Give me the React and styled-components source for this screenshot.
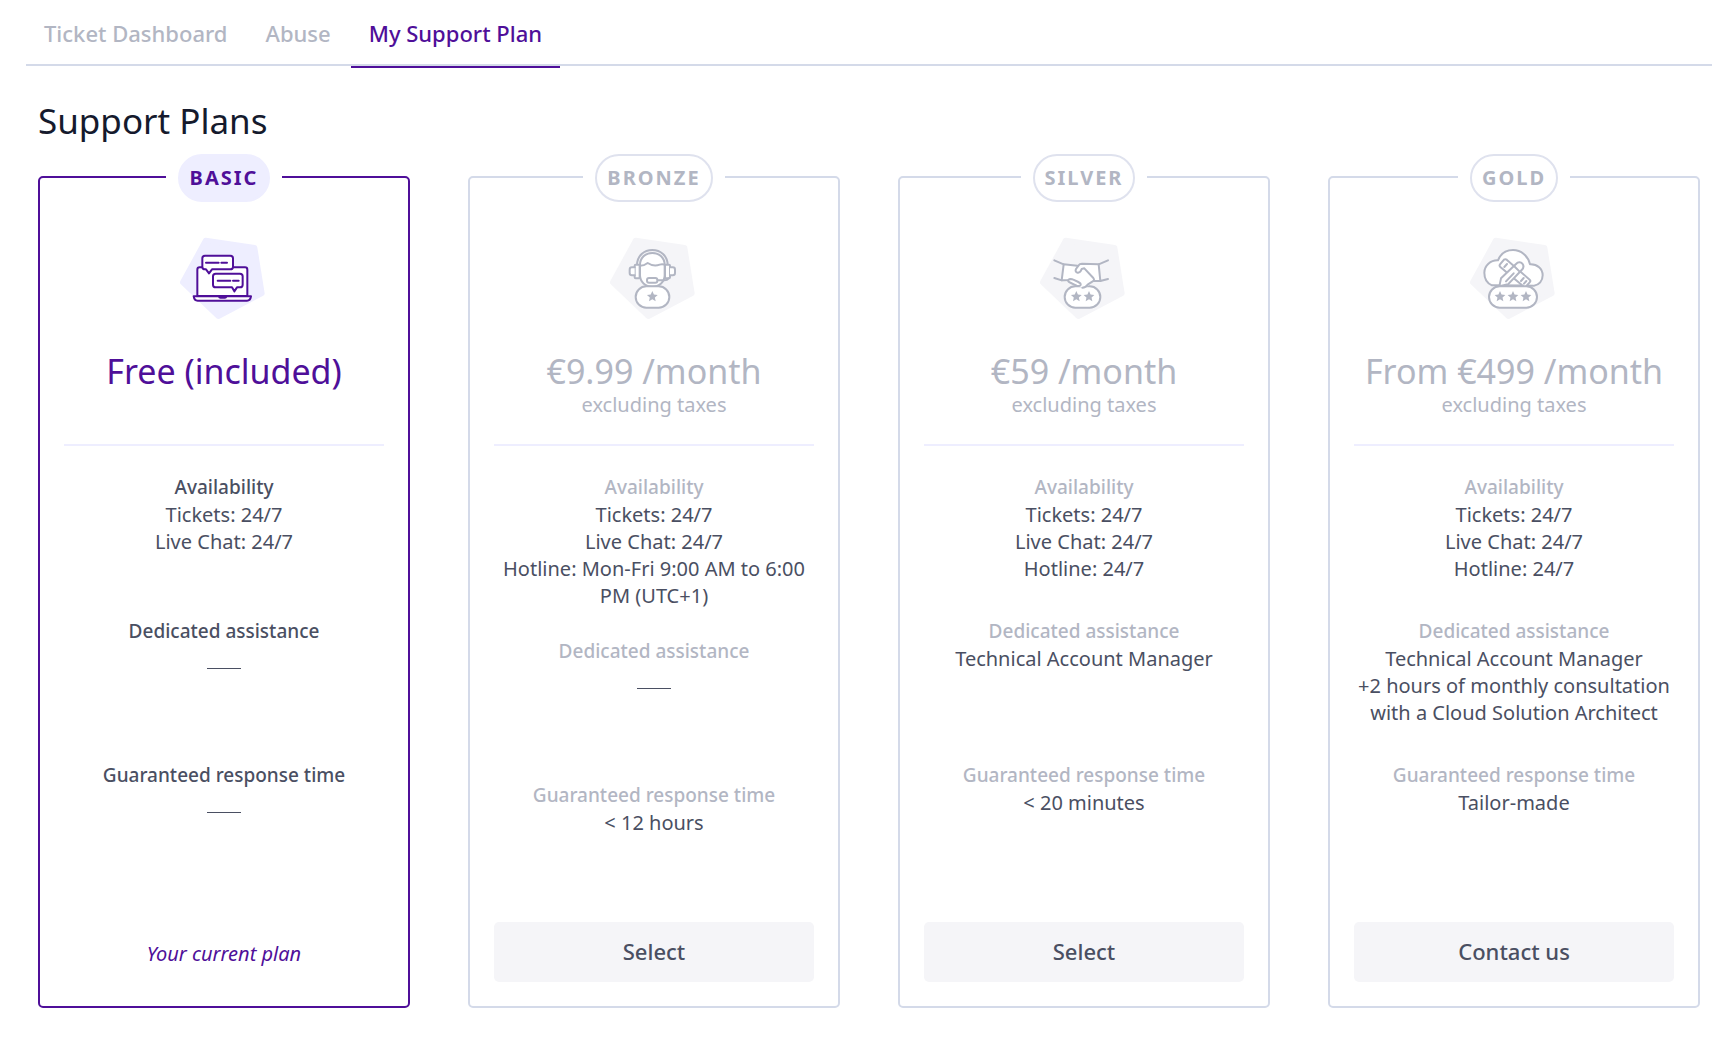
import React from "react";
import styled, { createGlobalStyle } from "styled-components";

const color = {
  purple: "#4f0f99",
  lilac: "#eeeeff",
  grey: "#b2b6c3",
  line: "#d4dae9",
  pillLine: "#dfe2ee",
  text: "#4a4f62",
  heading: "#151a2d",
  surface: "#f5f5f8",
};

const GlobalStyle = createGlobalStyle`
  *, *::before, *::after { box-sizing: border-box; }
  body {
    margin: 0;
    background: #fff;
    color: ${color.text};
    font-family: "Noto Sans", "Open Sans", sans-serif;
  }
`;

const TabBar = styled.nav`
  display: flex;
  gap: 2px;
  margin: 0 24px 0 26px;
  border-bottom: 2px solid ${color.line};
`;

const Tab = styled.a`
  position: relative;
  padding: 18px 18px 16px;
  font-size: 22px;
  line-height: 30px;
  font-weight: 500;
  text-decoration: none;
  color: ${(p) => (p.$active ? color.purple : color.grey)};

  &::after {
    content: "";
    display: ${(p) => (p.$active ? "block" : "none")};
    position: absolute;
    left: 0;
    right: 0;
    bottom: -4px;
    height: 2px;
    background: ${color.purple};
  }
`;

const Main = styled.main`
  padding: 33px 36px 46px 38px;
`;

const Title = styled.h1`
  margin: 0 0 33px;
  font-size: 35px;
  line-height: 44px;
  font-weight: 400;
  color: ${color.heading};
`;

const Plans = styled.div`
  display: grid;
  grid-template-columns: repeat(4, minmax(0, 1fr));
  gap: 58px;

  @media (max-width: 1300px) {
    grid-template-columns: repeat(2, minmax(0, 1fr));
  }
  @media (max-width: 760px) {
    grid-template-columns: minmax(0, 1fr);
  }
`;

const Card = styled.article`
  display: flex;
  flex-direction: column;
  align-items: center;
  padding: 0 24px 24px;
  border: 2px solid ${(p) => (p.$current ? color.purple : color.line)};
  border-radius: 5px;
  text-align: center;
`;

const PillSlot = styled.div`
  margin-top: -24px;
  padding: 0 12px;
  background: #fff;
`;

const Pill = styled.h2`
  margin: 0;
  padding: 0 10px;
  border: 2px solid ${(p) => (p.$current ? color.lilac : color.pillLine)};
  border-radius: 24px;
  background: ${(p) => (p.$current ? color.lilac : "#fff")};
  color: ${(p) => (p.$current ? color.purple : color.grey)};
  font-size: 20px;
  line-height: 44px;
  font-weight: 700;
  letter-spacing: 2px;
`;

const Art = styled.svg`
  display: block;
  width: 90px;
  height: 84px;
  margin: 34px 0 30px;
  color: ${(p) => (p.$current ? color.purple : color.grey)};
`;

const PriceBlock = styled.div`
  min-height: 68px;
  color: ${(p) => (p.$current ? color.purple : color.grey)};
`;

const Price = styled.p`
  margin: 0;
  font-size: 34px;
  line-height: 42px;
`;

const Taxes = styled.p`
  margin: 0;
  font-size: 20px;
  line-height: 26px;
`;

const Divider = styled.hr`
  width: 100%;
  height: 2px;
  margin: 26px 0 27px;
  border: 0;
  background: ${color.lilac};
`;

const Features = styled.div`
  display: flex;
  flex-direction: column;
  gap: 28px;
  width: 100%;
  margin-bottom: 25px;
`;

const Feature = styled.section`
  min-height: 116px;
`;

const FeatureName = styled.h3`
  margin: 0;
  font-size: 19px;
  line-height: 28px;
  font-weight: 500;
  color: ${(p) => (p.$current ? color.text : color.grey)};
`;

const FeatureList = styled.ul`
  margin: 0;
  padding: 0;
  list-style: none;
  font-size: 20px;
  line-height: 27px;
`;

const NoFeature = styled.hr`
  width: 34px;
  height: 1px;
  margin: 23px auto 0;
  border: 0;
  background: ${color.text};
`;

const PlanButton = styled.button`
  width: 100%;
  height: 60px;
  margin-top: auto;
  padding: 0 0 2px;
  border: 0;
  border-radius: 5px;
  background: ${color.surface};
  color: ${color.text};
  font-family: inherit;
  font-size: 22px;
  font-weight: 500;
  cursor: pointer;
`;

const CurrentNote = styled.p`
  margin: auto 0 0;
  padding-top: 4px;
  font-size: 20px;
  line-height: 56px;
  font-style: italic;
  color: ${color.purple};
`;

const starPoints = (cx, cy) =>
  Array.from({ length: 10 }, (_, i) => {
    const r = i % 2 ? 8 : 17;
    const a = (Math.PI / 5) * i - Math.PI / 2;
    return `${(cx + r * Math.cos(a)).toFixed(1)},${(cy + r * Math.sin(a)).toFixed(1)}`;
  }).join(" ");

function Stars({ x, width, at }) {
  return (
    <>
      <rect x={x} y="199" width={width} height="64" rx="32" />
      {at.map((cx) => (
        <polygon key={cx} points={starPoints(cx, 230)} fill="currentColor" stroke="none" />
      ))}
    </>
  );
}

function ChatDrawing() {
  return (
    <>
      <path d="M112 228V149Q112 142 119 142H255Q262 142 262 149V228Z" />
      <path d="M101 229H273Q271 242 261 242H113Q103 242 101 229Z" />
      <path d="M174 230H202Q200 236 195 236H181Q176 236 174 230Z" fill="currentColor" stroke="none" />
      <path d="M135 107H211Q219 107 219 115V140Q219 148 211 148H156L147 160L138 148H135Q127 148 127 140V115Q127 107 135 107Z" />
      <path d="M167 161H240Q248 161 248 169V194Q248 202 240 202H231L223 214L216 202H167Q159 202 159 194V169Q159 161 167 161Z" />
      <path d="M138 128H176M184 128H201M173 182H211M219 182H236" />
    </>
  );
}

function HeadsetDrawing() {
  return (
    <>
      <path d="M150 135V166C150 186 166 200 187 200C208 200 224 186 224 166V135C224 113 208 99 187 99C166 99 150 113 150 135Z" />
      <path d="M141 134C142 107 162 90 187 90C212 90 232 107 233 134" fill="none" />
      <path d="M146 137Q160 139 173 129Q191 141 209 134Q218 131 230 136" fill="none" />
      <rect x="134" y="134" width="15" height="41" rx="3" />
      <rect x="225" y="134" width="15" height="41" rx="3" />
      <path d="M134 142H126Q119 142 119 149V159Q119 166 126 166H134M240 142H248Q255 142 255 149V159Q255 166 248 166H240" />
      <path d="M202 181H223Q232 181 236 175" fill="none" />
      <rect x="171" y="174" width="31" height="14" rx="6" />
      <Stars x={137} width={101} at={[187]} />
    </>
  );
}

function HandshakeDrawing() {
  return (
    <>
      <Stars x={134} width={107} at={[169, 207]} />
      <path d="M131 133L175 136L190 131L236 134L241 183L222 183L197 203H188L125 181Z" stroke="none" />
      <path d="M103 121L131 133L125 181L103 174M264 121L236 133L241 183L264 177M131 133L172 137" fill="none" />
      <path d="M236 133L186 131Q179 131 176 136L168 147Q164 156 173 158Q181 159 185 147L193 145L220 174Q225 181 218 184L204 193Q197 203 187 203" fill="none" />
      <path d="M222 183H241M125 181H145" fill="none" />
      <path d="M152 177Q143 178 145 184Q147 187 170 197Q180 200 182 195Q183 190 175 186L160 179Q156 177 152 177Z" />
    </>
  );
}

function CloudDrawing() {
  return (
    <>
      <path d="M126 196C110 189 103 174 103 158C103 137 122 120 144 121C152 101 168 90 189 90C213 90 234 107 240 133C262 132 278 147 278 166C278 183 267 195 252 197Z" />
      <path d="M150 133L162 119Q166 116 170 119L239 179Q243 183 239 187L228 199Q224 203 220 199L151 141Q147 137 150 133Z" />
      <path d="M163 141L171 132M213 183L221 174M222 191L229 183" fill="none" />
      <path d="M153 175L198 132C205 124 213 126 217 131C222 137 220 145 215 150L174 193L148 199Z" />
      <path d="M192 138L209 155M168 184L191 160" fill="none" />
      <Stars x={117} width={144} at={[150, 189, 228]} />
    </>
  );
}

function PlanArt({ current, drawing: Drawing }) {
  return (
    <Art $current={current} viewBox="57 48 270 252" aria-hidden="true">
      <path
        d="M137 61L284 83L306 220L175 289L68 187Z"
        fill={current ? color.lilac : color.surface}
        stroke={current ? color.lilac : color.surface}
        strokeWidth="16"
        strokeLinejoin="round"
      />
      <g fill="#fff" stroke="currentColor" strokeWidth="6" strokeLinecap="round" strokeLinejoin="round">
        <Drawing />
      </g>
    </Art>
  );
}

const tabs = ["Ticket Dashboard", "Abuse", "My Support Plan"];

const plans = [
  {
    name: "BASIC",
    current: true,
    drawing: ChatDrawing,
    price: "Free (included)",
    availability: ["Tickets: 24/7", "Live Chat: 24/7"],
    assistance: [],
    response: [],
  },
  {
    name: "BRONZE",
    drawing: HeadsetDrawing,
    price: "€9.99 /month",
    taxes: true,
    availability: ["Tickets: 24/7", "Live Chat: 24/7", "Hotline: Mon-Fri 9:00 AM to 6:00 PM (UTC+1)"],
    assistance: [],
    response: ["< 12 hours"],
    action: "Select",
  },
  {
    name: "SILVER",
    drawing: HandshakeDrawing,
    price: "€59 /month",
    taxes: true,
    availability: ["Tickets: 24/7", "Live Chat: 24/7", "Hotline: 24/7"],
    assistance: ["Technical Account Manager"],
    response: ["< 20 minutes"],
    action: "Select",
  },
  {
    name: "GOLD",
    drawing: CloudDrawing,
    price: "From €499 /month",
    taxes: true,
    availability: ["Tickets: 24/7", "Live Chat: 24/7", "Hotline: 24/7"],
    assistance: ["Technical Account Manager", "+2 hours of monthly consultation with a Cloud Solution Architect"],
    response: ["Tailor-made"],
    action: "Contact us",
  },
];

function PlanFeature({ name, items, current }) {
  return (
    <Feature>
      <FeatureName $current={current}>{name}</FeatureName>
      {items.length ? (
        <FeatureList>
          {items.map((item) => (
            <li key={item}>{item}</li>
          ))}
        </FeatureList>
      ) : (
        <NoFeature />
      )}
    </Feature>
  );
}

function PlanCard({ plan }) {
  const { current } = plan;
  return (
    <Card $current={current}>
      <PillSlot>
        <Pill $current={current}>{plan.name}</Pill>
      </PillSlot>
      <PlanArt current={current} drawing={plan.drawing} />
      <PriceBlock $current={current}>
        <Price>{plan.price}</Price>
        {plan.taxes && <Taxes>excluding taxes</Taxes>}
      </PriceBlock>
      <Divider />
      <Features>
        <PlanFeature name="Availability" items={plan.availability} current={current} />
        <PlanFeature name="Dedicated assistance" items={plan.assistance} current={current} />
        <PlanFeature name="Guaranteed response time" items={plan.response} current={current} />
      </Features>
      {current ? (
        <CurrentNote>Your current plan</CurrentNote>
      ) : (
        <PlanButton type="button">{plan.action}</PlanButton>
      )}
    </Card>
  );
}

export default function App() {
  return (
    <>
      <GlobalStyle />
      <TabBar>
        {tabs.map((tab, i) => (
          <Tab key={tab} href="#" $active={i === 2} aria-current={i === 2 ? "page" : undefined}>
            {tab}
          </Tab>
        ))}
      </TabBar>
      <Main>
        <Title>Support Plans</Title>
        <Plans>
          {plans.map((plan) => (
            <PlanCard key={plan.name} plan={plan} />
          ))}
        </Plans>
      </Main>
    </>
  );
}
